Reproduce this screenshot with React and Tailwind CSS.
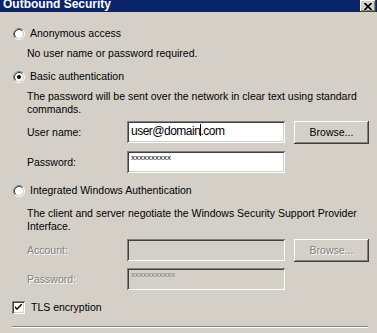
import React from "react";

const sunken =
  "shadow-[inset_1px_1px_0_#808080,inset_-1px_-1px_0_#ffffff,inset_2px_2px_0_#404040,inset_-2px_-2px_0_#d4d0c8]";
const raised =
  "shadow-[inset_-1px_-1px_0_#404040,inset_1px_1px_0_#ffffff,inset_-2px_-2px_0_#808080,inset_2px_2px_0_#d4d0c8]";

function Radio({ checked }) {
  return (
    <svg width="12" height="12" viewBox="0 0 12 12" className="shrink-0">
      <circle cx="6" cy="6" r="4.2" fill="#ffffff" />
      <path d="M2.11 9.89 A5.5 5.5 0 0 1 9.89 2.11" fill="none" stroke="#808080" strokeWidth="1" />
      <path d="M9.89 2.11 A5.5 5.5 0 0 1 2.11 9.89" fill="none" stroke="#ffffff" strokeWidth="1" />
      <path d="M2.82 9.18 A4.5 4.5 0 0 1 9.18 2.82" fill="none" stroke="#404040" strokeWidth="1" />
      <path d="M9.18 2.82 A4.5 4.5 0 0 1 2.82 9.18" fill="none" stroke="#d4d0c8" strokeWidth="1" />
      {checked && <circle cx="6" cy="6" r="2" fill="#000000" />}
    </svg>
  );
}

function Checkbox() {
  return (
    <div className={`w-[13px] h-[13px] bg-white shrink-0 ${sunken} flex items-center justify-center`}>
      <svg width="7" height="7" viewBox="0 0 7 7">
        <path d="M0 2 L0 4 L2 6 L7 1 L7 -1 L2 4 Z" fill="#000" />
      </svg>
    </div>
  );
}

function Field({ children, disabled }) {
  return (
    <div
      className={`w-[158px] h-[22px] ${sunken} ${disabled ? "bg-[#d4d0c8]" : "bg-white"} pl-[4px] pt-[3px] overflow-hidden`}
    >
      {children}
    </div>
  );
}

function Button({ disabled }) {
  return (
    <div
      className={`w-[75px] h-[23px] ${raised} bg-[#d4d0c8] flex items-center justify-center ${
        disabled ? "text-[#808080] [text-shadow:1px_1px_0_#ffffff]" : "text-black"
      }`}
    >
      Browse...
    </div>
  );
}

function Label({ children, disabled }) {
  return (
    <div
      className={`w-[100px] shrink-0 ${
        disabled ? "text-[#808080] [text-shadow:1px_1px_0_#ffffff]" : "text-black"
      }`}
    >
      {children}
    </div>
  );
}

export default function App() {
  return (
    <div
      className="w-[377px] h-[333px] bg-[#d4d0c8] overflow-hidden text-[10.5px] leading-[13px] text-black"
      style={{ fontFamily: '"Liberation Sans", Arial, sans-serif' }}
    >
      {/* Title bar */}
      <div className="h-[12px] bg-[#0a246a] flex items-start justify-between overflow-hidden">
        <div className="pl-[3px] mt-[-3px] text-white font-bold text-[12px] leading-[14px]">
          Outbound Security
        </div>
        <div className={`w-[16px] h-[12px] bg-[#d4d0c8] ${raised} flex items-center justify-center mr-[1px]`}>
          <svg width="8" height="7" viewBox="0 0 8 7">
            <path d="M0.5 0 L7.5 7 M7.5 0 L0.5 7" stroke="#000" strokeWidth="1.6" />
          </svg>
        </div>
      </div>

      <div className="pl-[13px] pr-[8px]">
        {/* Anonymous */}
        <div className="mt-[15px] h-[13px] flex items-center gap-[5px]">
          <Radio />
          <span>Anonymous access</span>
        </div>
        <div className="mt-[7px] pl-[14px] h-[13px]">No user name or password required.</div>

        {/* Basic */}
        <div className="mt-[10px] h-[13px] flex items-center gap-[5px]">
          <Radio checked />
          <span>Basic authentication</span>
        </div>
        <div className="mt-[7px] pl-[14px] h-[26px] w-[352px]">
          The password will be sent over the network in clear text using standard commands.
        </div>
        <div className="mt-[5px] pl-[14px] h-[22px] flex items-center">
          <Label>User name:</Label>
          <Field>
            <div className="text-[12px] leading-[15px] tracking-[-0.5px] text-black whitespace-nowrap">
              user@domain
              <span className="inline-block w-[1px] h-[12px] bg-black align-[-1px] mr-[-1px]" />
              .com
            </div>
          </Field>
          <div className="ml-[9px]">
            <Button />
          </div>
        </div>
        <div className="mt-[8px] pl-[14px] h-[22px] flex items-center">
          <Label>Password:</Label>
          <Field>
            <div className="text-[8px] leading-[8px] text-black">xxxxxxxxxx</div>
          </Field>
        </div>

        {/* Integrated */}
        <div className="mt-[11px] h-[13px] flex items-center gap-[5px]">
          <Radio />
          <span>Integrated Windows Authentication</span>
        </div>
        <div className="mt-[10px] pl-[14px] h-[26px] w-[352px]">
          The client and server negotiate the Windows Security Support Provider Interface.
        </div>
        <div className="mt-[6px] pl-[14px] h-[22px] flex items-center">
          <Label disabled>Account:</Label>
          <Field disabled />
          <div className="ml-[9px]">
            <Button disabled />
          </div>
        </div>
        <div className="mt-[7px] pl-[14px] h-[22px] flex items-center">
          <Label disabled>Password:</Label>
          <Field disabled>
            <div className="text-[8px] leading-[8px] text-[#808080]">xxxxxxxxxxx</div>
          </Field>
        </div>

        {/* TLS */}
        <div className="mt-[11px] h-[13px] flex items-center gap-[6px] ml-[-1px]">
          <Checkbox />
          <span>TLS encryption</span>
        </div>

        <div className="mt-[12px] mr-[1px] ml-[-1px] border-t border-t-[#808080] border-b border-b-white" />
      </div>
    </div>
  );
}
